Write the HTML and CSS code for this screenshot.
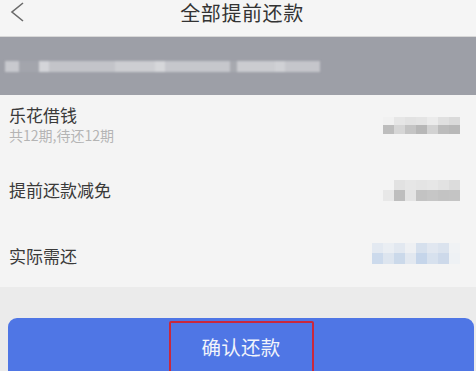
FILE: index.html
```html
<!DOCTYPE html>
<html lang="zh">
<head>
<meta charset="utf-8">
<link rel="stylesheet" href="styles.css">
</head>
<body>
<div class="page">
  <header class="topbar">
    <svg class="back" width="16" height="20" viewBox="0 0 16 20"><polyline points="14,1 3,10 14,19" fill="none" stroke="#6a6a6a" stroke-width="1.6" stroke-linejoin="miter"/></svg>
    <h1 class="title">全部提前还款</h1>
  </header>
  <div class="band">
    <div class="band-blur"></div>
  </div>
  <div class="list">
    <div class="row row-first">
      <div class="labels">
        <div class="name">乐花借钱</div>
        <div class="sub">共12期,待还12期</div>
      </div>
      <div class="mosaic m1">
        <span></span><span></span><span></span><span></span><span></span><span></span><span></span>
        <span></span><span></span><span></span><span></span><span></span><span></span><span></span>
      </div>
    </div>
    <div class="row">
      <div class="name">提前还款减免</div>
      <div class="mosaic m2">
        <span></span><span></span><span></span><span></span><span></span><span></span><span></span>
        <span></span><span></span><span></span><span></span><span></span><span></span><span></span>
      </div>
    </div>
    <div class="row row-last">
      <div class="name">实际需还</div>
      <div class="mosaic m3">
        <span></span><span></span><span></span><span></span><span></span><span></span><span></span><span></span>
        <span></span><span></span><span></span><span></span><span></span><span></span><span></span><span></span>
      </div>
    </div>
  </div>
  <div class="footer">
    <div class="btn"><span class="btn-label">确认还款</span></div>
  </div>
</div>
</body>
</html>
```
FILE: styles.css
```css
* { box-sizing: border-box; margin: 0; padding: 0; }
html, body { width: 476px; height: 371px; overflow: hidden; }
body { background: #ebebeb; font-family: "Noto Sans CJK SC", "Noto Sans", sans-serif; color: #333; }
.page { display: flex; flex-direction: column; width: 476px; }
.topbar { position: relative; height: 37px; background: #f5f5f5; border-bottom: 1px solid #d8d8d8; display: flex; align-items: flex-start; justify-content: center; padding: 1px 0 0 8px; }
.back { position: absolute; left: 9px; top: 2px; }
.title { font-size: 20px; font-weight: 400; color: #333; line-height: 24px; letter-spacing: 0.6px; }
.band { height: 58px; background: #9d9fa7; display: flex; align-items: center; padding-left: 5px; }
.band-blur { width: 315px; height: 11px; margin-top: 1px; filter: blur(0.8px);
  background: linear-gradient(90deg,
    #c8c9ce 0 14px, #a3a5ac 14px 34px, #d4d5d9 34px 44px, #c3c4c9 44px 110px, #cdced2 110px 150px,
    #d6d7da 150px 160px, #c6c7cc 160px 225px, #a7a9af 225px 232px, #cbccd0 232px 270px, #d0d1d5 270px 280px, #c5c6cb 280px 315px); }
.list { background: #f4f4f4; display: flex; flex-direction: column; }
.row { display: flex; align-items: center; justify-content: space-between; height: 64px; padding: 0 16px 0 9px; }
.row-first { height: 63px; align-items: flex-start; padding-top: 8px; }
.row-last { height: 65px; padding-top: 2px; }
.name { font-size: 17px; line-height: 24px; color: #3a3a3a; }
.sub { font-size: 14px; line-height: 18px; color: #b4b4b4; margin-top: -1px; }
.mosaic { display: grid; filter: blur(0.6px); }
.mosaic span { display: block; }
.m1 { grid-template-columns: repeat(7, 11px); grid-template-rows: 8px 9px; margin-top: 14px; }
.m1 span:nth-child(1) { background: #f1f1f1; } .m1 span:nth-child(2) { background: #e6e6e6; } .m1 span:nth-child(3) { background: #e2e2e2; }
.m1 span:nth-child(4) { background: #e4e4e4; } .m1 span:nth-child(5) { background: #ebebeb; } .m1 span:nth-child(6) { background: #e0e0e0; } .m1 span:nth-child(7) { background: #dadada; }
.m1 span:nth-child(8) { background: #bdbdbd; } .m1 span:nth-child(9) { background: #d6d6d6; } .m1 span:nth-child(10) { background: #c4c4c4; }
.m1 span:nth-child(11) { background: #b7b7b7; } .m1 span:nth-child(12) { background: #d2d2d2; } .m1 span:nth-child(13) { background: #bcbcbc; } .m1 span:nth-child(14) { background: #b8b8b8; }
.m2 { grid-template-columns: repeat(7, 11px); grid-template-rows: 10px 11px; }
.m2 span:nth-child(1) { background: #f4f4f4; } .m2 span:nth-child(2) { background: #e2e2e2; } .m2 span:nth-child(3) { background: #e6e6e6; }
.m2 span:nth-child(4) { background: #e4e4e4; } .m2 span:nth-child(5) { background: #e6e6e6; } .m2 span:nth-child(6) { background: #e2e2e2; } .m2 span:nth-child(7) { background: #dcdcdc; }
.m2 span:nth-child(8) { background: #e8e8e8; } .m2 span:nth-child(9) { background: #bebebe; } .m2 span:nth-child(10) { background: #e4e4e4; }
.m2 span:nth-child(11) { background: #c3c3c3; } .m2 span:nth-child(12) { background: #c6c6c6; } .m2 span:nth-child(13) { background: #c3c3c3; } .m2 span:nth-child(14) { background: #c4c4c4; }
.m3 { grid-template-columns: repeat(8, 11px); grid-template-rows: 10px 11px; margin-top: -4px; }
.m3 span:nth-child(1) { background: #e3e9f1; } .m3 span:nth-child(2) { background: #eaeef3; } .m3 span:nth-child(3) { background: #e2e8f0; } .m3 span:nth-child(4) { background: #eef0f3; }
.m3 span:nth-child(5) { background: #d6e0ed; } .m3 span:nth-child(6) { background: #e1e7f0; } .m3 span:nth-child(7) { background: #dbe3ee; } .m3 span:nth-child(8) { background: #f0f2f4; }
.m3 span:nth-child(9) { background: #ccdaec; } .m3 span:nth-child(10) { background: #dde5ef; } .m3 span:nth-child(11) { background: #cbd9ea; } .m3 span:nth-child(12) { background: #e2e8f0; }
.m3 span:nth-child(13) { background: #c5d5ea; } .m3 span:nth-child(14) { background: #d7e1ee; } .m3 span:nth-child(15) { background: #cdd9ea; } .m3 span:nth-child(16) { background: #eef1f4; }
.footer { background: #ebebeb; padding: 31px 2px 0 8px; }
.btn { height: 70px; background: #4f76e5; border-radius: 9px 9px 0 0; display: flex; justify-content: center; padding-top: 3px; }
.btn-label { display: flex; justify-content: center; width: 145px; height: 60px; padding-top: 11px; border: 2px solid #c9283d; border-radius: 2px; color: #f2f4fb; font-size: 19.5px; line-height: 26px; letter-spacing: 0.3px; }
```
